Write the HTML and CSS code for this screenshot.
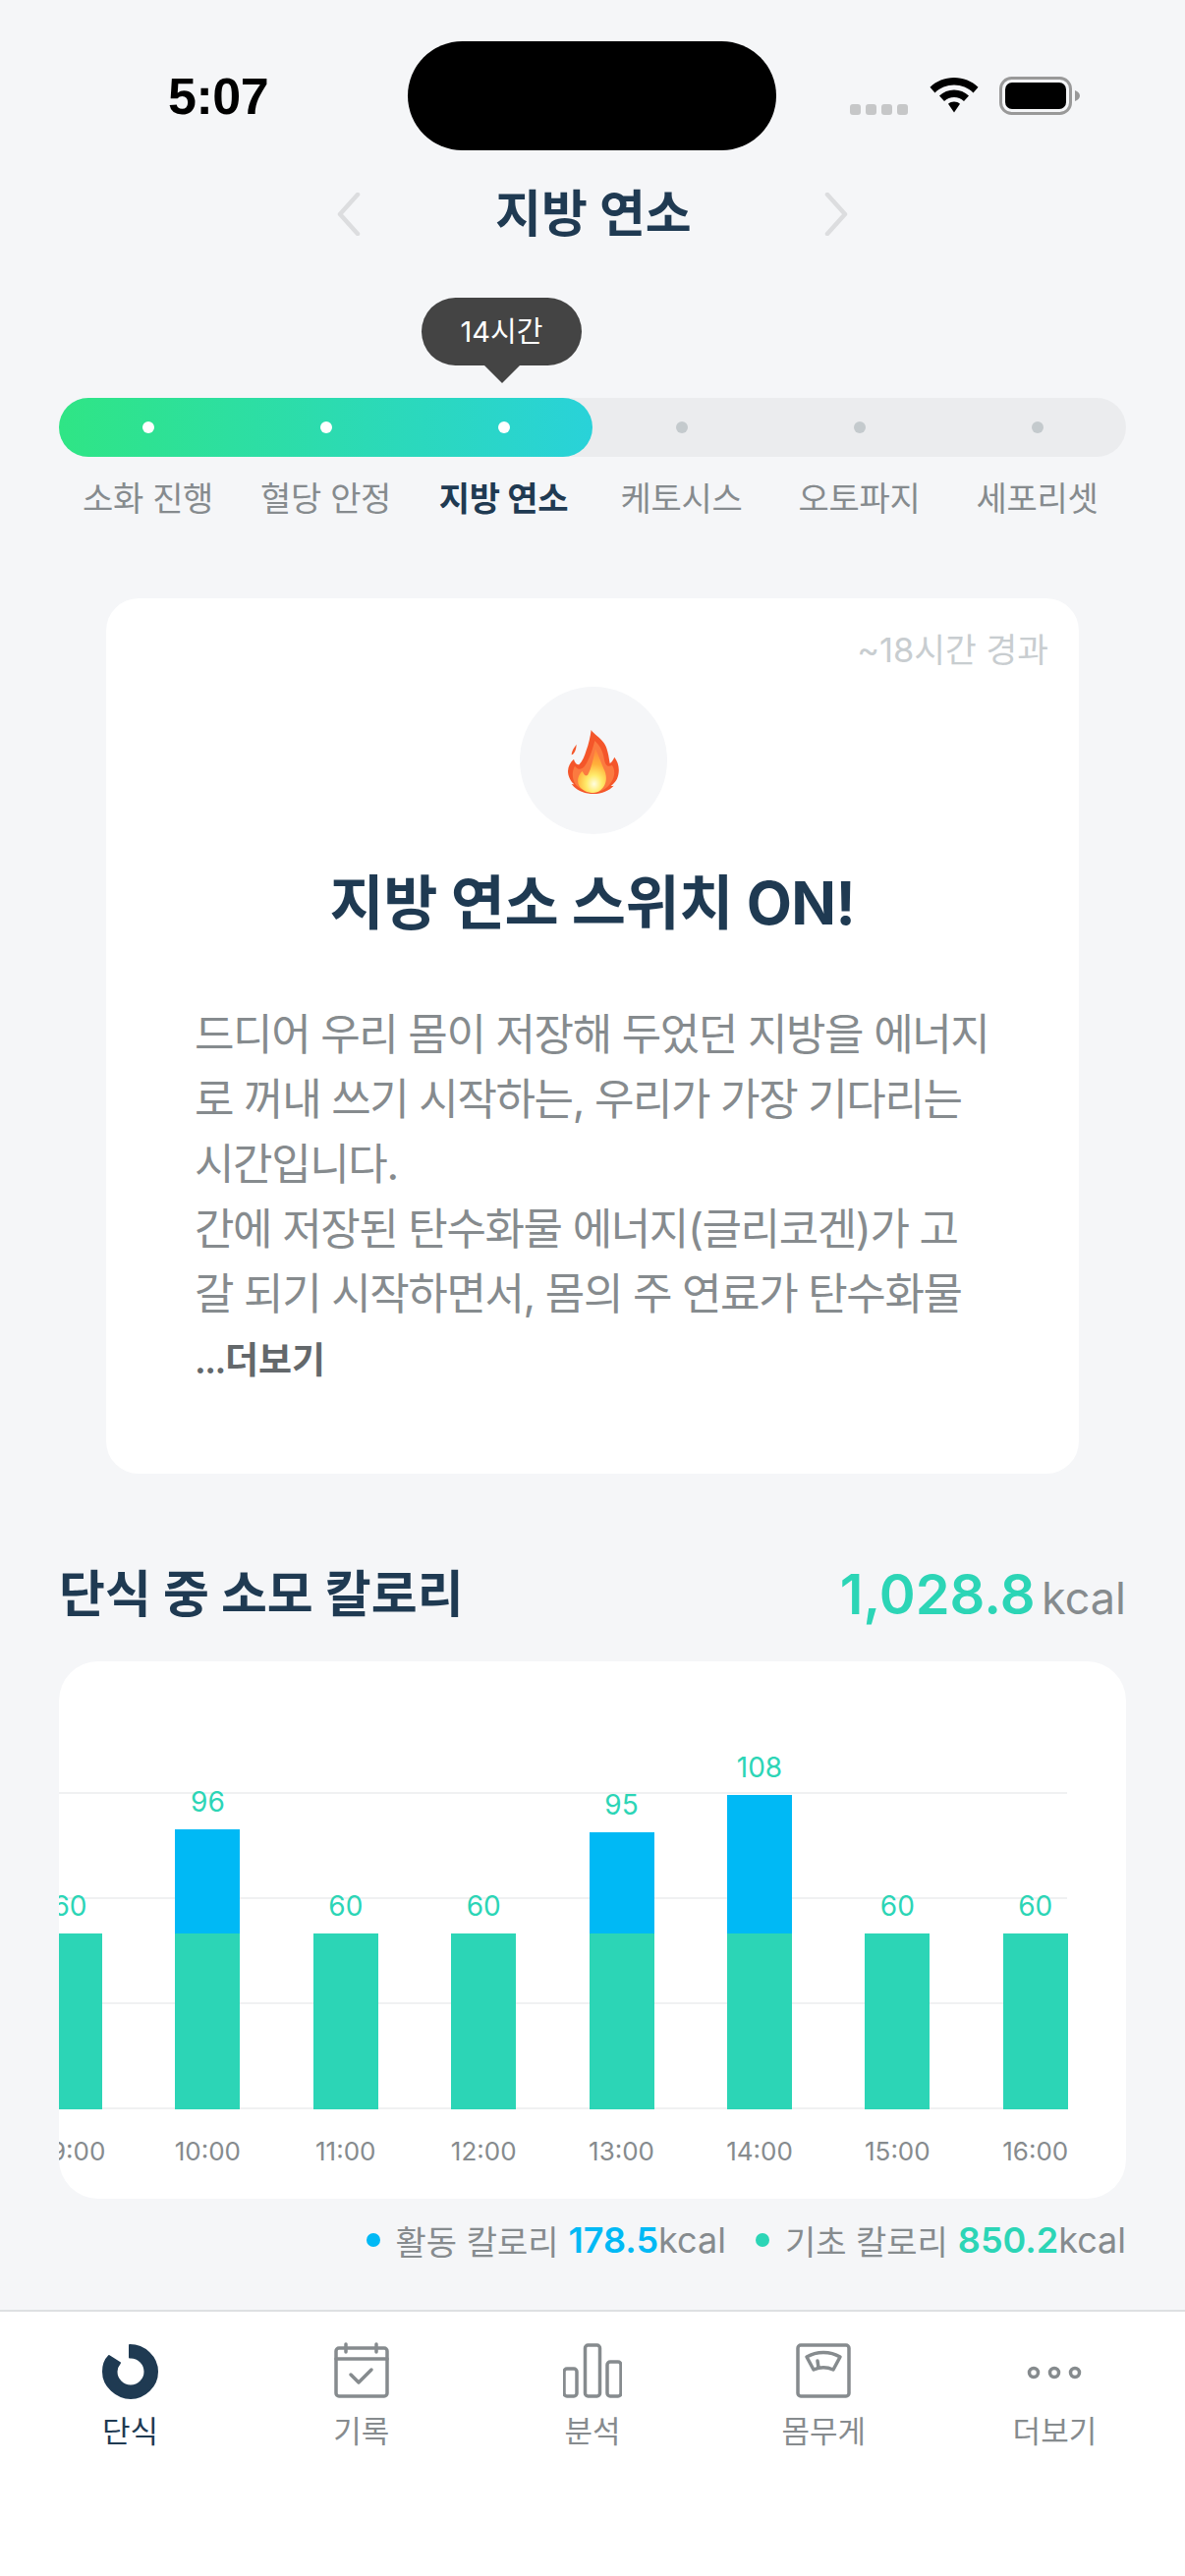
FILE: index.html
```html
<!DOCTYPE html>
<html lang="ko">
<head>
<meta charset="utf-8">
<title>지방 연소</title>
<link rel="stylesheet" href="styles.css">
</head>
<body>
<div class="page">
  <header class="status">
    <div class="status-left"><span class="time">5:07</span></div>
    <div class="island"></div>
    <div class="status-right">
      <div class="signal"><i></i><i></i><i></i><i></i></div>
      <svg class="wifi" width="52" height="38" viewBox="0 0 52 38"><path d="M26 1C16.500 1 8 4.500 1.500 10.800L6.500 16.400C11.700 11.400 18.500 8.500 26 8.500S40.300 11.400 45.500 16.400L50.500 10.800C44 4.500 35.500 1 26 1Z"/><path d="M26 13.500C20.300 13.500 15.100 15.600 11 19.500L16 25C18.800 22.500 22.200 21 26 21S33.200 22.500 36 25L41 19.500C36.900 15.600 31.700 13.500 26 13.500Z"/><path d="M26 25.500C23.700 25.500 21.600 26.300 20 27.800L26 36.500L32 27.800C30.400 26.300 28.300 25.500 26 25.500Z"/></svg>
      <svg class="battery" width="84" height="39" viewBox="0 0 84 39"><rect x="1.500" y="1.500" width="71" height="36" rx="11" fill="none" stroke="#999" stroke-width="3"/><rect x="6" y="6" width="62" height="27" rx="7"/><path d="M77 14C80 15 82 17 82 19.500S80 24 77 25Z" fill="#999"/></svg>
    </div>
  </header>

  <nav class="stage-nav">
    <svg width="24" height="44" viewBox="0 0 24 44"><path d="M21 2L3 22L21 42" class="chev"/></svg>
    <h1 class="stage-title">지방 연소</h1>
    <svg width="24" height="44" viewBox="0 0 24 44"><path d="M3 2L21 22L3 42" class="chev"/></svg>
  </nav>

  <section class="progress">
    <div class="tooltip">14시간</div>
    <div class="track">
      <div class="track-fill">
        <div class="cell"><span class="dot on"></span></div>
        <div class="cell"><span class="dot on"></span></div>
        <div class="cell"><span class="dot on"></span></div>
      </div>
      <div class="track-rest">
        <div class="cell"><span class="dot"></span></div>
        <div class="cell"><span class="dot"></span></div>
        <div class="cell"><span class="dot"></span></div>
      </div>
    </div>
    <div class="stage-labels">
      <span>소화 진행</span><span>혈당 안정</span><span class="active">지방 연소</span><span>케토시스</span><span>오토파지</span><span>세포리셋</span>
    </div>
  </section>

  <section class="card">
    <div class="card-note">~18시간 경과</div>
    <div class="flame-circle">
      <svg width="52" height="65" viewBox="172 160 156 195">
        <defs>
          <radialGradient id="flameCore" gradientUnits="userSpaceOnUse" cx="252" cy="325" r="85" gradientTransform="matrix(1 0 0 1.15 0 -49)">
            <stop offset="0" stop-color="#fffde0"/>
            <stop offset="0.28" stop-color="#ffeb6b"/>
            <stop offset="0.62" stop-color="#ffb13a"/>
            <stop offset="1" stop-color="#ff8a3a"/>
          </radialGradient>
        </defs>
        <path fill="#f4562a" d="M243 160C250 172 268 180 282 200C293 216 296 238 300 262C306 258 310 252 314 243C324 256 329 272 327 290C325 308 317 322 303 331C309 331 312 330 312 330C298 345 276 355 250 355C226 355 203 346 190 333C188 331 186 328 183 325C186 325 189 326 191 326C179 315 172 300 172 285C173 271 179 258 190 249C192 258 198 266 206 266C216 256 223 240 228 222C235 204 240 182 243 160Z"/>
        <path fill="#f4562a" d="M198 204C192 212 184 222 183 236C191 234 197 222 198 204Z"/>
        <path fill="#fb7a40" d="M254 193C268 206 278 222 282 246C285 262 290 276 307 268C316 282 316 302 305 318C292 340 272 350 250 350C226 350 206 340 194 324C184 308 184 286 193 270C201 282 214 282 222 272C236 252 246 224 254 193Z"/>
        <path fill="url(#flameCore)" d="M256 218C266 238 272 258 282 280C290 296 292 316 282 332C274 345 262 352 250 352C232 352 214 344 206 330C198 314 204 296 216 286C222 298 226 302 232 298C244 278 250 244 256 218Z"/>
      </svg>
    </div>
    <h2 class="card-title">지방 연소 스위치 ON!</h2>
    <p class="card-body">드디어 우리 몸이 저장해 두었던 지방을 에너지<br>로 꺼내 쓰기 시작하는, 우리가 가장 기다리는<br>시간입니다.<br>간에 저장된 탄수화물 에너지(글리코겐)가 고<br>갈 되기 시작하면서, 몸의 주 연료가 탄수화물</p>
    <div class="card-more"><span class="ell">...</span><b>더보기</b></div>
  </section>

  <section class="calories">
    <div class="cal-head">
      <h2 class="cal-title">단식 중 소모 칼로리</h2>
      <div class="cal-total"><span class="cal-num">1,028.8</span> <span class="cal-unit">kcal</span></div>
    </div>
    <div class="chart-card">
      <div class="plot">
        <div class="grid-lines"><i></i><i></i><i></i><i></i></div>
        <div class="bars">
          <div class="col"><span class="val">60</span><div class="seg base" style="height:179px"></div></div>
          <div class="col"><span class="val">96</span><div class="seg act" style="height:106px"></div><div class="seg base" style="height:179px"></div></div>
          <div class="col"><span class="val">60</span><div class="seg base" style="height:179px"></div></div>
          <div class="col"><span class="val">60</span><div class="seg base" style="height:179px"></div></div>
          <div class="col"><span class="val">95</span><div class="seg act" style="height:103px"></div><div class="seg base" style="height:179px"></div></div>
          <div class="col"><span class="val">108</span><div class="seg act" style="height:141px"></div><div class="seg base" style="height:179px"></div></div>
          <div class="col"><span class="val">60</span><div class="seg base" style="height:179px"></div></div>
          <div class="col"><span class="val">60</span><div class="seg base" style="height:179px"></div></div>
        </div>
      </div>
      <div class="x-axis">
        <span>09:00</span><span>10:00</span><span>11:00</span><span>12:00</span><span>13:00</span><span>14:00</span><span>15:00</span><span>16:00</span>
      </div>
    </div>
    <div class="legend">
      <span class="leg-dot blue"></span><span class="leg-text">활동 칼로리</span><b class="leg-num blue-t">178.5</b><span class="leg-unit">kcal</span>
      <span class="leg-dot green"></span><span class="leg-text">기초 칼로리</span><b class="leg-num green-t">850.2</b><span class="leg-unit">kcal</span>
    </div>
  </section>

  <footer class="tabbar">
    <div class="tab active">
      <svg width="60" height="60" viewBox="0 0 60 60"><path fill="#1f3a52" stroke="#1f3a52" stroke-width="2" stroke-linejoin="round" d="M29 3C44 3 57 15 57 30S44 57 30 57S2 45 2 30C2 24 4 18 8 14L19 21C16.500 24 15.500 27 15.500 30C15.500 38 22 44.500 30 44.500S44.500 38 44.500 30S38 15.500 30 15.500L29 15.500Z"/></svg>
      <span>단식</span>
    </div>
    <div class="tab">
      <svg width="60" height="60" viewBox="0 0 60 60" class="ico"><rect x="4" y="6" width="52" height="49" rx="3"/><path d="M4 17H56M14 2V10M45 2V10M19 33L27 41L40 28"/></svg>
      <span>기록</span>
    </div>
    <div class="tab">
      <svg width="60" height="60" viewBox="0 0 60 60" class="ico"><rect x="1" y="27" width="13" height="28" rx="3"/><rect x="22.500" y="3" width="15" height="52" rx="3"/><rect x="45" y="20" width="14" height="35" rx="3"/></svg>
      <span>분석</span>
    </div>
    <div class="tab">
      <svg width="60" height="60" viewBox="0 0 60 60" class="ico"><rect x="4" y="3" width="52" height="52" rx="3"/><path d="M13 15C23 9 37 9 47 15L40 28C33 25 27 25 20 28ZM24 19L25 26"/></svg>
      <span>몸무게</span>
    </div>
    <div class="tab">
      <svg width="60" height="60" viewBox="0 0 60 60" class="ico"><circle cx="9" cy="31" r="4.500"/><circle cx="30" cy="31" r="4.500"/><circle cx="51" cy="31" r="4.500"/></svg>
      <span>더보기</span>
    </div>
  </footer>
</div>
</body>
</html>
```
FILE: styles.css
```css
* { box-sizing: border-box; }
html, body { margin: 0; padding: 0; }
body { font-family: Inter, "Noto Sans CJK KR", "Noto Sans", sans-serif; background: #f5f6f8; }
.page { width: 1206px; height: 2622px; display: flex; flex-direction: column; overflow: hidden; background: #f5f6f8; }
h1, h2, p { margin: 0; font-weight: inherit; }

.status { height: 153px; padding-top: 42px; display: flex; align-items: flex-start; flex: none; }
.status-left { width: 415px; flex: none; padding: 26px 0 0 171px; }
.time { display: block; font: 700 52px/60px "Liberation Sans", Inter, sans-serif; color: #000; letter-spacing: -0.5px; }
.island { width: 375px; height: 111px; border-radius: 56px; background: #000; flex: none; }
.status-right { flex: 1; display: flex; align-items: flex-start; padding: 36px 0 0 75px; }
.signal { display: flex; gap: 5.500px; margin-top: 28px; margin-right: 21.500px; }
.signal i { width: 10.500px; height: 10.500px; border-radius: 3px; background: #c6c7c8; display: block; }
.wifi { margin-right: 20px; }

.stage-nav { flex: none; display: flex; align-items: center; justify-content: center; gap: 137px; margin-top: 36px; height: 58px; }
.chev { fill: none; stroke: #dcdddf; stroke-width: 4.500; stroke-linecap: round; stroke-linejoin: round; }
.stage-title { font-size: 51px; line-height: 58px; font-weight: 700; color: #1f3a52; width: 198px; padding-right: 5px; text-align: center; white-space: nowrap; }

.progress { flex: none; padding: 0 60px; margin-top: 56px; }
.tooltip { position: relative; width: 163px; height: 69px; margin-left: 369px; border-radius: 35px; background: #444; color: #fff; font-size: 29px; line-height: 69px; text-align: center; }
.tooltip::after { content: ""; position: absolute; left: 64px; top: 69px; border-left: 18px solid transparent; border-right: 18px solid transparent; border-top: 18px solid #444; }
.track { display: flex; height: 60px; margin-top: 33px; border-radius: 30px; background: #ebecee; }
.track-fill { width: 543px; flex: none; display: flex; border-radius: 30px; background: linear-gradient(90deg, #2fe585, #29d2d9); }
.track-rest { flex: 1; display: flex; }
.cell { flex: 1; display: flex; align-items: center; justify-content: center; }
.dot { width: 12px; height: 12px; border-radius: 50%; background: #c4cacd; }
.dot.on { background: #fff; }
.stage-labels { display: grid; grid-template-columns: repeat(6, 1fr); margin-top: 20px; font-size: 34px; line-height: 46px; letter-spacing: -0.300px; color: #868b8e; text-align: center; white-space: nowrap; }
.stage-labels .active { font-weight: 700; color: #1f3a52; }

.card { flex: none; width: 990px; height: 891px; margin: 78px 0 0 108px; padding: 31px 31px 0 90px; border-radius: 33px; background: #fff; }
.card-note { font-size: 34.500px; line-height: 44px; color: #c8cdd0; text-align: right; }
.flame-circle { width: 150px; height: 150px; margin: 15px 0 0 331px; border-radius: 50%; background: #f5f6f8; display: flex; align-items: center; justify-content: center; padding-top: 3px; }
.card-title { margin: 28px 0 0 -90px; width: 990px; text-align: center; font-size: 60px; line-height: 84px; letter-spacing: -0.500px; font-weight: 700; color: #1f3a52; white-space: nowrap; }
.card-body { margin-top: 59px; font-size: 44px; line-height: 66px; letter-spacing: -1.400px; color: #868b8e; white-space: nowrap; }
.card-more { font-size: 37px; line-height: 66px; margin-top: 2px; }
.card-more .ell { color: #63686b; letter-spacing: -1.500px; font-weight: 600; }
.card-more b { color: #63686b; font-weight: 700; }

.calories { flex: none; padding: 0 60px; margin-top: 83px; }
.cal-head { display: flex; justify-content: space-between; align-items: center; height: 60px; margin-top: 10px; }
.cal-title { font-size: 51px; line-height: 60px; font-weight: 700; color: #1f3a52; white-space: nowrap; }
.cal-num { font-size: 56px; font-weight: 600; color: #2cd5b6; }
.cal-unit { font-size: 45px; color: #868b8e; margin-left: 2px; }
.chart-card { margin-top: 38px; height: 547px; border-radius: 40px; background: #fff; overflow: hidden; padding-top: 133px; }
.plot { position: relative; height: 323px; margin-right: 60px; }
.grid-lines { position: absolute; inset: 0; display: flex; flex-direction: column; justify-content: space-between; }
.grid-lines i { display: block; height: 2px; background: #f0f1f2; }
.bars { position: relative; display: flex; align-items: flex-end; gap: 74.400px; height: 323px; margin-left: -22px; }
.col { width: 66px; flex: none; display: flex; flex-direction: column; align-items: center; }
.val { font-size: 28px; line-height: 36px; color: #2cd5b6; margin-bottom: 10px; }
.seg { width: 66px; flex: none; }
.base { background: #2cd5b6; }
.act { background: #00b9f5; }
.x-axis { display: flex; gap: 74.400px; margin: 25px 0 0 -22px; }
.x-axis span { width: 66px; flex: none; display: flex; justify-content: center; font-size: 26px; line-height: 36px; color: #868b8e; white-space: nowrap; }
.legend { display: flex; align-items: center; justify-content: flex-end; margin-top: 20px; height: 44px; font-size: 36px; color: #868b8e; white-space: nowrap; }
.leg-text { font-size: 34px; }
.leg-dot { width: 14px; height: 14px; border-radius: 50%; margin-right: 16px; }
.blue { background: #00b9f5; }
.green { background: #2cd5b6; margin-left: 30px; }
.leg-num { font-weight: 600; margin-left: 10px; }
.blue-t { color: #00b9f5; }
.green-t { color: #2cd5b6; }

.tabbar { flex: 1; margin-top: 49px; border-top: 2px solid #dee0e2; background: #fff; padding: 31px 15px 0; display: grid; grid-template-columns: repeat(5, 1fr); align-items: start; }
.tab { display: flex; flex-direction: column; align-items: center; font-size: 31px; line-height: 40px; color: #868b8e; }
.tab svg { display: block; margin-bottom: 11px; }
.tab.active { color: #1f3a52; }
.ico { fill: none; stroke: #868b8e; stroke-width: 3.500; stroke-linecap: round; stroke-linejoin: round; }
```
